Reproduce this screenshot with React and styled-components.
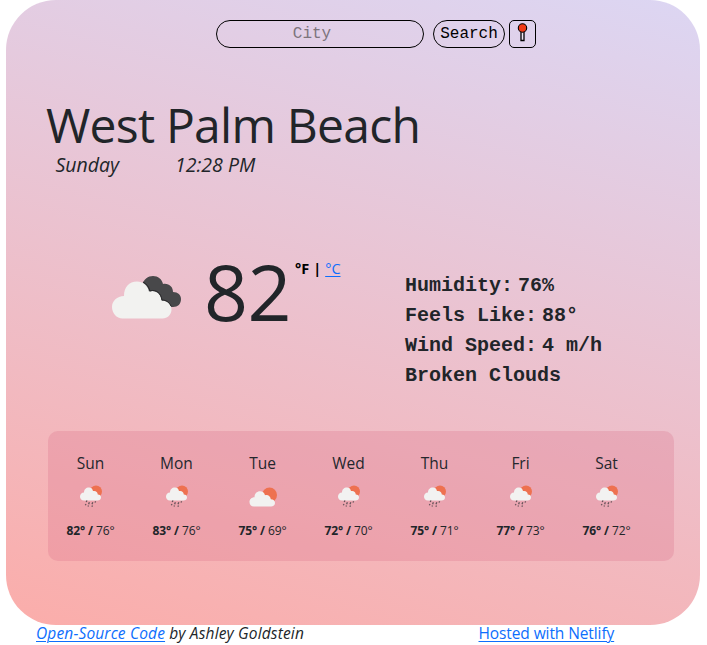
import React from "react";
import styled, { createGlobalStyle } from "styled-components";

const sans = '"Open Sans", "Noto Sans", sans-serif';
const mono = '"Courier New", "Liberation Mono", monospace';

const GlobalStyle = createGlobalStyle`
  * { box-sizing: border-box; }
  body { margin: 0; background: #fff; color: #212529; font-family: ${sans}; overflow: hidden; }
`;

const Page = styled.div`
  width: 707px;
  height: 645px;
  padding: 0 7px 0 6px;
  overflow: hidden;
`;

const Card = styled.main`
  height: 625px;
  padding: 20px 26px 0 40px;
  border-radius: 50px;
  background: linear-gradient(15deg, #fbadaa 0%, #dcd6f3 100%);
`;

const SearchForm = styled.form`
  display: flex;
  height: 28px;
  margin-left: 170px;
`;

const CityInput = styled.input`
  width: 208px;
  height: 28px;
  margin: 0 9px 0 0;
  padding: 0 16px 0 0;
  border: 1px solid #000;
  border-radius: 20px;
  background: transparent;
  text-align: center;
  font: 16px ${mono};
  &::placeholder { color: #7d747c; opacity: 1; }
`;

const SearchButton = styled.button`
  width: 72px;
  height: 28px;
  margin-right: 4px;
  padding: 0;
  border: 1px solid #000;
  border-radius: 20px;
  background: transparent;
  color: #000;
  font: 16px ${mono};
`;

const PinButton = styled(SearchButton)`
  width: 27px;
  margin: 0;
  padding: 2px 0 0;
  border-radius: 5px;
  display: flex;
  justify-content: center;
`;

const Text = styled.span`
  display: inline-block;
  white-space: nowrap;
`;

const City = styled.h1`
  height: 56px;
  margin: 49px 0 0;
  font-size: 48px;
  font-weight: 400;
  line-height: 56px;
  letter-spacing: -0.75px;
`;

const Moment = styled.div`
  display: grid;
  grid-template-columns: 119.5px 1fr;
  height: 24px;
  margin: 0 0 0 9.5px;
  font-size: 19.5px;
  font-style: italic;
  font-weight: 400;
  line-height: 24px;
`;

const Current = styled.section`
  display: grid;
  grid-template-columns: 359px 1fr;
  height: 155px;
  margin-top: 79px;
`;

const Reading = styled.div`
  display: flex;
  align-items: flex-start;
  padding-left: 66px;
`;

const CloudArt = styled.svg`
  flex: none;
  width: 70px;
  height: 44px;
  margin-top: 19px;
`;

const Degrees = styled.div`
  width: 91px;
  margin: -4px 0 0 22px;
  height: 80px;
  font-size: 77px;
  font-weight: 400;
  line-height: 80px;
  letter-spacing: -0.5px;
`;

const Units = styled.div`
  display: flex;
  gap: 4px;
  margin-top: 2px;
  color: #000;
  font-size: 14.5px;
  font-weight: 700;
  line-height: 22px;
`;

const Link = styled.a`
  color: #0d6efd;
  font-weight: 400;
  text-decoration: underline;
  text-decoration-thickness: 1px;
  text-underline-offset: 2px;
`;

const Facts = styled.ul`
  margin: 15px 0 0;
  padding: 0;
  list-style: none;
  font: bold 20px/30px ${mono};
`;

const Fact = styled.li`
  display: flex;
  gap: 5px;
  height: 30px;
`;

const Forecast = styled.section`
  display: grid;
  grid-template-columns: repeat(7, 86px);
  width: 626px;
  height: 130px;
  margin: 20px 0 0 2px;
  border-radius: 10px;
  background: rgba(216, 105, 130, 0.25);
`;

const Day = styled.article`
  display: flex;
  flex-direction: column;
  align-items: center;
  padding: 20px 1px 0 0;
`;

const DayName = styled.div`
  font-size: 15.5px;
  line-height: 24px;
  text-align: center;
  color: #24272d;
`;

const DayIcon = styled.svg`
  width: 30px;
  height: 26px;
  margin-top: 8px;
`;

const Range = styled.div`
  margin-top: 12px;
  font-size: 12px;
  line-height: 20px;
  white-space: nowrap;
  letter-spacing: -0.1px;
  b { font-weight: 700; }
`;

const Footer = styled.footer`
  display: grid;
  grid-template-columns: 442.5px 1fr;
  height: 20px;
  padding-left: 30px;
  font-size: 15.5px;
  line-height: 17px;
`;

const Credit = styled.em`
  letter-spacing: 0.16px;
`;

const Host = styled.span`
  letter-spacing: -0.1px;
`;

const Pin = () => (
  <svg width="11" height="20" viewBox="0 0 11 20">
    <path d="M4 8h3v9.5H4z" fill="#eee6f3" stroke="#000" strokeWidth="1.3" />
    <circle cx="5.5" cy="5" r="4.2" fill="#f03a17" stroke="#000" strokeWidth="1.1" />
  </svg>
);

const BrokenClouds = () => (
  <CloudArt viewBox="0 0 70 44">
    <path
      d="M30 10C32 4 36 1 41 1c5 0 9 3 10 8 6-1 10 3 10 8 5 0 8 3 8 7 0 5-3 8-8 8H36z"
      fill="#48484a"
    />
    <path
      d="M10.500 43.500C4.500 43.500 0 38 0 32c0-6 5-11 12-11C12 12 17 6.500 25 6.500c6 0 11 4 12 10 6-2 12 2 12.500 9 6 0 10 4 10 9 0 5-4 9-9 9z"
      fill="#f2f2f0"
    />
    <path d="M31 7c4 2 6 5 7 9 6-2 11 2 12 9 4 0 7 2 9 6" fill="none" stroke="#28282a" strokeWidth="1" />
  </CloudArt>
);

const ForecastIcon = ({ rain }) =>
  rain ? (
    <DayIcon viewBox="0 0 30 26">
      <circle cx="20" cy="8.500" r="6" fill="#ee7150" />
      <path
        d="M8 17.500c-2.700 0-4-2-4-4s1.600-4 4-4c0-3 2-5 5-5 2 0 3.500 1 4 3.500 3-.5 4.500 1 4.800 3.500 2 0 3.200 1.200 3.200 3S23.500 17.500 21.500 17.500z"
        fill="#f2f2f1"
      />
      <path
        d="m11 17.500-.8 1.500m3.200.3-.8 2m4.200-2-.8 2m3.700-3-.8 1.200M10 21l-.7 1.300m3.200.2-.5 1m4.500-1-.6 1.200"
        stroke="#67545a"
        strokeWidth="1.300"
      />
    </DayIcon>
  ) : (
    <DayIcon viewBox="0 0 30 26">
      <circle cx="21.500" cy="12" r="7.500" fill="#ee7150" />
      <path
        d="M6 23.500c-3 0-4.500-2-4.500-4.500s2-4.700 5-4.700C6.500 10.500 9 8.300 12 8.300c2.500 0 4.400 1.400 5 4 3-.8 5.500 1 5.800 4 2.600 0 4.200 1.500 4.200 3.700S25.300 23.500 23 23.500z"
        fill="#f2f2f1"
      />
    </DayIcon>
  );

const facts = [
  ["Humidity:", "76%"],
  ["Feels Like:", "88°"],
  ["Wind Speed:", "4 m/h"],
  ["Broken Clouds"],
];

const days = [
  ["Sun", 82, 76, true],
  ["Mon", 83, 76, true],
  ["Tue", 75, 69, false],
  ["Wed", 72, 70, true],
  ["Thu", 75, 71, true],
  ["Fri", 77, 73, true],
  ["Sat", 76, 72, true],
];

export default function App() {
  return (
    <Page>
      <GlobalStyle />
      <Card>
        <SearchForm onSubmit={(e) => e.preventDefault()}>
          <CityInput placeholder="City" />
          <SearchButton>Search</SearchButton>
          <PinButton type="button" aria-label="Use my location">
            <Pin />
          </PinButton>
        </SearchForm>
        <City>West Palm Beach</City>
        <Moment>
          <span>Sunday</span>
          <span>12:28 PM</span>
        </Moment>
        <Current>
          <Reading>
            <BrokenClouds />
            <Degrees>82</Degrees>
            <Units>
              <span>°F</span>
              <span>|</span>
              <Link href="#">°C</Link>
            </Units>
          </Reading>
          <Facts>
            {facts.map(([label, value]) => (
              <Fact key={label}>
                <span>{label}</span>
                {value && <span>{value}</span>}
              </Fact>
            ))}
          </Facts>
        </Current>
        <Forecast>
          {days.map(([name, high, low, rain]) => (
            <Day key={name}>
              <DayName>{name}</DayName>
              <ForecastIcon rain={rain} />
              <Range>
                <b>{high}° /</b> {low}°
              </Range>
            </Day>
          ))}
        </Forecast>
      </Card>
      <Footer>
        <Credit>
          <Text>
            <Link href="#">Open-Source Code</Link> by Ashley Goldstein
          </Text>
        </Credit>
        <Host>
          <Link href="#">Hosted with Netlify</Link>
        </Host>
      </Footer>
    </Page>
  );
}
